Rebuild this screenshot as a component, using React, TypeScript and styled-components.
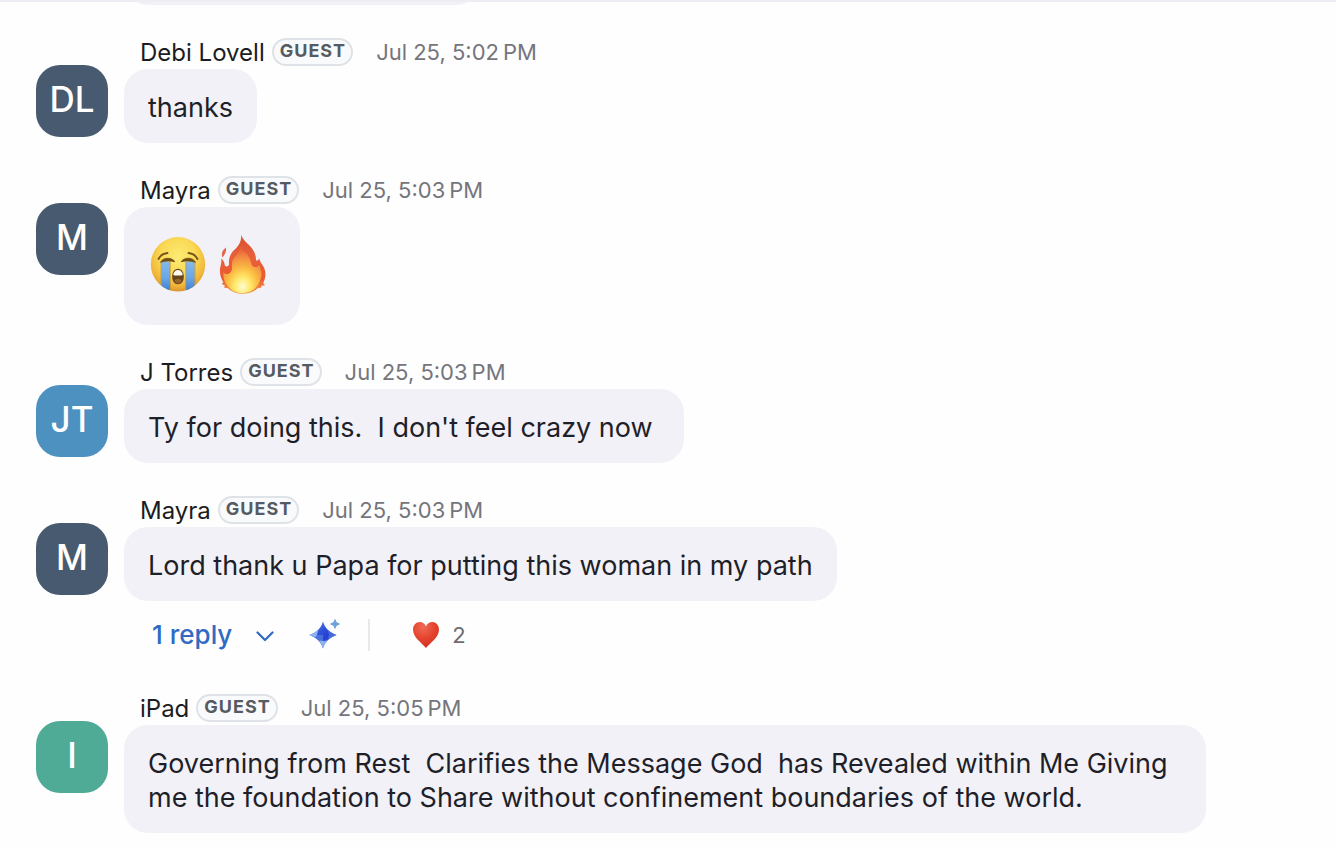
import React from "react";
import styled, { createGlobalStyle } from "styled-components";

const GlobalStyle = createGlobalStyle`
  *, *::before, *::after { box-sizing: border-box; }
  body {
    margin: 0;
    background: #fefefe;
    color: #1f1f29;
    font-family: Inter, "Liberation Sans", sans-serif;
  }
`;

const Page = styled.main`
  border-top: 2px solid #ededf4;
`;

const PreviousMessage = styled.div`
  height: 3px;
  margin-left: 124px;
  display: flex;
  align-items: flex-end;
  overflow: hidden;
`;

const PreviousBubble = styled.div`
  flex: none;
  width: 356px;
  height: 74px;
  border-radius: 24px;
  background: #f2f1f7;
`;

const Thread = styled.ol`
  list-style: none;
  margin: 0;
  padding: 28px 36px 12px;
  display: flex;
  flex-direction: column;
  gap: 28px;
`;

const Message = styled.li`
  display: flex;
  align-items: flex-start;
  gap: 16px;
`;

const Avatar = styled.div<{ $color: string }>`
  flex: none;
  width: 72px;
  height: 72px;
  margin-top: 32px;
  padding-bottom: 4px;
  display: flex;
  align-items: center;
  justify-content: center;
  border-radius: 24px;
  background: ${(p) => p.$color};
  color: #fff;
  font-size: 35px;
  font-weight: 500;
  line-height: 40px;
`;

const Content = styled.div`
  flex: 1;
  min-width: 0;
  display: flex;
  flex-direction: column;
  align-items: flex-start;
`;

const Header = styled.header`
  height: 36px;
  padding: 4px 16px 0;
  display: flex;
  align-items: center;
  white-space: nowrap;
`;

const Name = styled.span`
  font-size: 24px;
  line-height: 32px;
  color: #1c1c22;
`;

const Badge = styled.span`
  height: 28px;
  margin: 0 23px 2px 7px;
  padding: 0 5px 3px 6px;
  display: flex;
  align-items: center;
  border: 2px solid #dfe2e6;
  border-radius: 14px;
  background: #f8fafc;
  color: #565b62;
  font-size: 18px;
  font-weight: 700;
  letter-spacing: 1px;
`;

const Time = styled.time`
  padding-bottom: 2px;
  font-size: 22px;
  line-height: 30px;
  color: #75757c;
`;

const Bubble = styled.div`
  max-width: calc(100% - 94px);
  padding: 22px 24px 18px;
  border-radius: 24px;
  background: #f2f1f7;
`;

const Text = styled.p`
  margin: 0;
  font-size: 27px;
  line-height: 34px;
  white-space: pre-wrap;
`;

const EmojiLine = styled.div`
  display: flex;

  svg { display: block; }
`;

const Actions = styled.div`
  height: 60px;
  padding: 18px 0 10px 28px;
  display: flex;
  align-items: center;
`;

const ActionButton = styled.button<{ $gap?: number; $end?: number }>`
  display: flex;
  align-items: center;
  gap: ${(p) => p.$gap ?? 0}px;
  margin: 0 ${(p) => p.$end ?? 0}px 0 0;
  padding: 0;
  border: 0;
  background: none;
  font: inherit;
  cursor: pointer;
`;

const ReplyLabel = styled.span`
  color: #306ac2;
  font-size: 26px;
  font-weight: 500;
  line-height: 32px;
`;

const Divider = styled.span`
  width: 2px;
  height: 32px;
  margin-right: 42px;
  background: #e8e8ed;
`;

const Count = styled.span`
  color: #6c6c72;
  font-size: 22px;
  line-height: 32px;
`;

const CryingFace = () => (
  <svg width="64" height="78" viewBox="0 2 64 78" role="img" aria-label="Loudly crying face">
    <defs>
      <radialGradient id="face" cx="0.5" cy="0.36" r="0.66">
        <stop offset="0" stopColor="#fdec74" />
        <stop offset="0.5" stopColor="#fad955" />
        <stop offset="0.82" stopColor="#f0b337" />
        <stop offset="1" stopColor="#d48d2b" />
      </radialGradient>
      <linearGradient id="tear" x1="0" y1="0" x2="0" y2="1">
        <stop offset="0" stopColor="#86b9ea" />
        <stop offset="0.55" stopColor="#69a6e6" />
        <stop offset="1" stopColor="#3a7ccf" />
      </linearGradient>
      <clipPath id="faceClip"><circle cx="30" cy="37.3" r="27.2" /></clipPath>
    </defs>
    <circle cx="30" cy="37.3" r="27.2" fill="url(#face)" />
    <g clipPath="url(#faceClip)">
      <path d="M13.300 34.500h8.700v30h-8.700z" fill="url(#tear)" />
      <path d="M38 34.500h8.700v30h-8.700z" fill="url(#tear)" />
      <path d="M13 35v30M22.200 35v30M37.800 35v30M47 35v30" stroke="#b08c3c" strokeWidth="0.7" />
    </g>
    <path d="M12.500 35.300c2.500-5 10.500-5.600 14.500-.6-4.500-1.100-9.500-1-14.500.6zM47.500 35.300c-2.500-5-10.500-5.600-14.500-.6 4.500-1.100 9.500-1 14.500.6z" fill="#6f4d14" stroke="#6f4d14" strokeWidth="0.8" strokeLinejoin="round" />
    <path d="M10.500 32c1.800-3.400 5-5.700 9-6M49.500 32c-1.800-3.400-5-5.700-9-6" fill="none" stroke="#765319" strokeWidth="1.900" strokeLinecap="round" />
    <path d="M30 41.800c3.600 0 5.800 3.600 5.800 7.800 0 4.600-2.100 7.700-5.800 7.700s-5.800-3.100-5.800-7.700c0-4.200 2.200-7.800 5.800-7.800z" fill="#6b4318" />
    <path d="M25.500 46.300c1-2.200 2.500-3.400 4.500-3.400s3.500 1.200 4.500 3.400c.5 1.300 0 2.100-1.300 2.100h-6.400c-1.300 0-1.800-.8-1.300-2.100z" fill="#fffaf0" />
    <path d="M26.200 53.500c2.300-2.200 5.300-2.200 7.600 0-.8 1.900-2 2.800-3.800 2.800s-3-.9-3.800-2.800z" fill="#94652f" />
  </svg>
);

const Fire = () => (
  <svg width="64" height="78" viewBox="0 2 64 78" role="img" aria-label="Fire">
    <defs>
      <linearGradient id="flame" x1="0" y1="0" x2="0" y2="1">
        <stop offset="0" stopColor="#d2502f" />
        <stop offset="0.35" stopColor="#e8603a" />
        <stop offset="0.75" stopColor="#ea5a31" />
        <stop offset="1" stopColor="#f4a04a" />
      </linearGradient>
      <radialGradient id="core" cx="0.5" cy="0.86" r="0.8">
        <stop offset="0" stopColor="#fffbd2" />
        <stop offset="0.25" stopColor="#ffea6c" />
        <stop offset="0.5" stopColor="#fcbd45" />
        <stop offset="0.8" stopColor="#f28a42" />
        <stop offset="1" stopColor="#e8643a" />
      </radialGradient>
    </defs>
    <path
      d="M29.200 7.200c.8 4.500 4.300 7.300 7.800 10.800 4.600 4.700 7.200 9.500 7 15.500 1.300.3 2.600-.6 3.300-2.300.3 3.800 2.700 5.400 4.300 8.500 2.700 5.300 2.300 10.800-.3 16 .3 1.300 1 1.900 2 2.300-1.400.7-2.500.8-3.700.6 0 .9-.3 1.700-1 2.500-1.200-.1-2.200 0-3.100.5-4 3.500-8.800 5.100-14.700 5.100-6.400 0-11.400-2.100-15.300-5.800-1.300.2-2.700.1-3.900-.6.8-.4 1.200-1 1.200-1.900-1.500-.3-2.500-.9-3.200-2.100 1 0 1.600-.3 1.600-1.100-3.200-5.500-4.200-11.200-2.500-16.800.7-2.300.8-4.500.4-6.900 2.300 1.600 3.300 3.700 3.700 6.700 1.200 1.900 3.300 1.500 4.200-.5-.5-5.500.9-10.600 4.900-14.400 4.300-4.200 7.800-8.300 7.300-16.100z"
      fill="url(#flame)"
    />
    <path
      d="M28.300 20c2.300 3.600 6.700 6.200 9 10.500 2 3.800 1.700 7.800 4.200 9.300 2.500.9 4.500-.2 6-1.800.4 3.300 2.500 6.700 1.900 11-1 5.800-3.900 10.300-7.300 13-3.200 2.700-7 4-11.500 4-6 0-11.200-2.500-14.600-6.600-3.800-4.600-5.300-9.600-4.400-14.500 1 1.900 2.700 2.600 4.600 2 3.200-1 4.200-4.300 3.800-8-.8-8.600 6.300-9.600 8.300-18.900z"
      fill="url(#core)"
    />
    <path d="M14 20.500c.4 3.700-.6 6.200-3.500 10-1.500-3.800-.2-7.600 3.500-10z" fill="#e2664b" />
  </svg>
);

const Chevron = () => (
  <svg width="18" height="32" viewBox="0 0 18 32" aria-hidden="true">
    <path d="M1.500 13.500 9 21l7.500-7.500" fill="none" stroke="#306ac2" strokeWidth="2.200" strokeLinecap="round" strokeLinejoin="round" />
  </svg>
);

const Sparkle = () => (
  <svg width="32" height="32" viewBox="0 0 32 32" aria-hidden="true">
    <defs>
      <linearGradient id="star" x1="0" y1="0" x2="1" y2="1">
        <stop offset="0" stopColor="#6a97e6" />
        <stop offset="0.4" stopColor="#2f52da" />
        <stop offset="0.62" stopColor="#2440d2" />
        <stop offset="1" stopColor="#7fb2ef" />
      </linearGradient>
    </defs>
    <path d="M14 2.500c2 6.500 5.500 10.500 13.500 13.500-8 3-11.500 7-13.500 13.500C12 23 8.500 19 .5 16 8.500 13 12 9 14 2.500z" fill="url(#star)" />
    <path d="M14 16H.5c8 3 11.500 7 13.500 13.500z" fill="#5f8be2" opacity="0.6" />
    <path d="M.5 16C4.500 14.500 7.300 12.700 9.300 10.500L8 16l-2 2.300c-1.700-.9-3.500-1.600-5.500-2.300z" fill="#a3c6f5" opacity="0.8" />
    <path d="M14 29.500c-1-3.300-2.300-5.900-4-8l4 .5 4-.5c-1.700 2.100-3 4.700-4 8z" fill="#a3c6f5" opacity="0.8" />
    <path d="M27.500 16c-4-1.500-7-3.300-9-5.600L20 16l-1.500 5.600c2-2.300 5-4.100 9-5.600z" fill="#4d72de" opacity="0.8" />
    <path d="M26 .5c.8 2.600 1.900 3.700 4.500 4.500-2.600.8-3.700 1.900-4.500 4.500-.8-2.600-1.900-3.700-4.500-4.500 2.600-.8 3.700-1.900 4.500-4.500z" fill="#6ba3dc" stroke="#4f8bd0" strokeWidth="0.6" />
  </svg>
);

const Heart = () => (
  <svg width="28" height="32" viewBox="0 0 28 32" aria-hidden="true">
    <defs>
      <radialGradient id="heart" cx="0.4" cy="0.2" r="0.85">
        <stop offset="0" stopColor="#f06a55" />
        <stop offset="0.5" stopColor="#e5452f" />
        <stop offset="1" stopColor="#cf2e22" />
      </radialGradient>
    </defs>
    <path d="M14 29C9.500 23.500 1 18.500 1 10.500 1 6.200 4 3 7.700 3c2.900 0 5.200 1.700 6.300 4.500C15.100 4.700 17.400 3 20.300 3 24 3 27 6.200 27 10.500c0 8-8.500 13-13 18.500z" fill="url(#heart)" />
  </svg>
);

interface ChatMessage {
  id: number;
  initials: string;
  color: string;
  name: string;
  time: string;
  text?: string;
  replies?: number;
  hearts?: number;
}

const SLATE = "#485a70";

const messages: ChatMessage[] = [
  { id: 1, initials: "DL", color: SLATE, name: "Debi Lovell", time: "5:02", text: "thanks" },
  { id: 2, initials: "M", color: SLATE, name: "Mayra", time: "5:03" },
  { id: 3, initials: "JT", color: "#4d91c1", name: "J Torres", time: "5:03", text: "Ty for doing this.  I don't feel crazy now " },
  { id: 4, initials: "M", color: SLATE, name: "Mayra", time: "5:03", text: "Lord thank u Papa for putting this woman in my path", replies: 1, hearts: 2 },
  { id: 5, initials: "I", color: "#4fab96", name: "iPad", time: "5:05", text: "Governing from Rest  Clarifies the Message God  has Revealed within Me Giving me the foundation to Share without confinement boundaries of the world." },
];

export default function App() {
  return (
    <>
      <GlobalStyle />
      <Page>
        <PreviousMessage>
          <PreviousBubble />
        </PreviousMessage>
        <Thread>
          {messages.map((m) => (
            <Message key={m.id}>
              <Avatar $color={m.color}>{m.initials}</Avatar>
              <Content>
                <Header>
                  <Name>{m.name}</Name>
                  <Badge>GUEST</Badge>
                  <Time>{`Jul 25, ${m.time}\u202fPM`}</Time>
                </Header>
                <Bubble>
                  {m.text ? (
                    <Text>{m.text}</Text>
                  ) : (
                    <EmojiLine>
                      <CryingFace />
                      <Fire />
                    </EmojiLine>
                  )}
                </Bubble>
                {m.replies && (
                  <Actions>
                    <ActionButton type="button" $gap={24} $end={35}>
                      <ReplyLabel>{m.replies} reply</ReplyLabel>
                      <Chevron />
                    </ActionButton>
                    <ActionButton type="button" aria-label="AI Companion" $end={27}>
                      <Sparkle />
                    </ActionButton>
                    <Divider />
                    <ActionButton type="button" $gap={12}>
                      <Heart />
                      <Count>{m.hearts}</Count>
                    </ActionButton>
                  </Actions>
                )}
              </Content>
            </Message>
          ))}
        </Thread>
      </Page>
    </>
  );
}
